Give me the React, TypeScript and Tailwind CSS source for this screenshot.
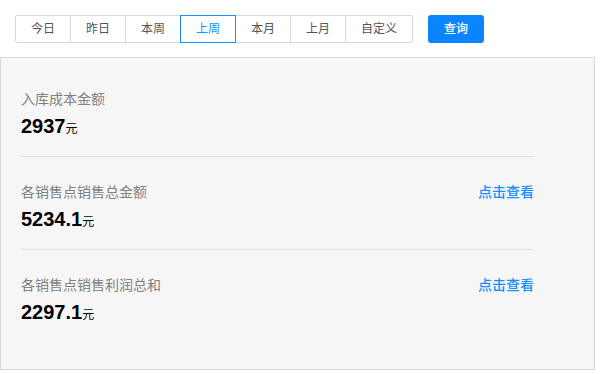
import React from 'react';

const tabs = ['今日', '昨日', '本周', '上周', '本月', '上月', '自定义'];

const stats = [
  { label: '入库成本金额', value: '2937', link: false },
  { label: '各销售点销售总金额', value: '5234.1', link: true },
  { label: '各销售点销售利润总和', value: '2297.1', link: true },
];

const App: React.FC = () => {
  const active = 3;

  return (
    <div className="w-[600px] h-[374px] bg-white font-['Liberation_Sans','Noto_Sans_CJK_SC',sans-serif]">
      {/* Toolbar */}
      <div className="flex items-center h-[57px] pl-[15px]">
        <div className="flex h-[28px]">
          {tabs.map((t, i) => (
            <button
              key={t}
              className={`h-full text-[12px] border ${i === tabs.length - 1 ? 'w-[68px] rounded-r-[2px]' : 'w-[56px]'} ${i === 0 ? 'rounded-l-[2px]' : '-ml-px'} ${
                i === active
                  ? 'relative z-10 border-[#1890ff] text-[#1890ff]'
                  : 'border-[#d9d9d9] text-[#555]'
              }`}
            >
              {t}
            </button>
          ))}
        </div>
        <button className="ml-[15px] w-[56px] h-[28px] rounded-[3px] bg-[#0a84ff] text-white text-[12px] font-medium">
          查询
        </button>
      </div>

      {/* Stats panel */}
      <div className="w-[595px] h-[313px] bg-[#f6f6f6] border border-[#d9d9d9] pt-[6px] pl-[20px]">
        {stats.map((s, i) => (
          <div
            key={s.label}
            className={`w-[513px] pt-[25px] pb-[18px] ${i < stats.length - 1 ? 'border-b border-[#e0e0e0]' : ''}`}
          >
            <div className="flex justify-between items-center h-[20px]">
              <span className="text-[14px] text-[#808080]">{s.label}</span>
              {s.link && <span className="text-[14px] font-medium text-[#1890ff]">点击查看</span>}
            </div>
            <div className="mt-[5px] h-[24px] flex items-baseline text-black">
              <span className="text-[20px] font-bold leading-[24px]">{s.value}</span>
              <span className="text-[12px]">元</span>
            </div>
          </div>
        ))}
      </div>
    </div>
  );
};

export default App;
